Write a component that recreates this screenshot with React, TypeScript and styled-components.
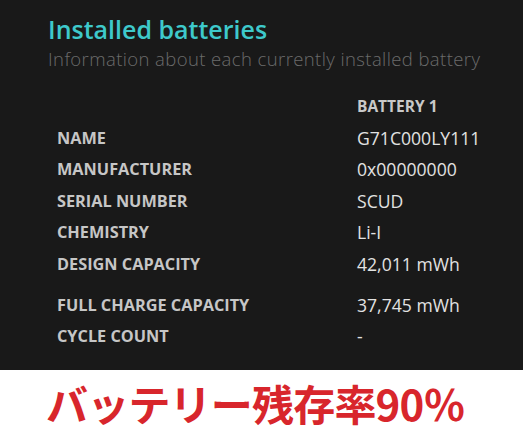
import styled, { createGlobalStyle } from "styled-components";

const GlobalStyle = createGlobalStyle`
  html, body {
    margin: 0;
    padding: 0;
    background: #ffffff;
  }
`;

const rows: { label: string; value: string; gap?: boolean }[] = [
  { label: "NAME", value: "G71C000LY111" },
  { label: "MANUFACTURER", value: "0x00000000" },
  { label: "SERIAL NUMBER", value: "SCUD" },
  { label: "CHEMISTRY", value: "Li-I" },
  { label: "DESIGN CAPACITY", value: "42,011 mWh" },
  { label: "FULL CHARGE CAPACITY", value: "37,745 mWh", gap: true },
  { label: "CYCLE COUNT", value: "-" },
];

const App = () => {
  return (
    <Page>
      <GlobalStyle />
      <Panel>
        <Title>Installed batteries</Title>
        <Subtitle>Information about each currently installed battery</Subtitle>
        <Grid>
          <Cell />
          <HeadCell>BATTERY 1</HeadCell>
          {rows.map((r) => (
            <Row key={r.label} $gap={r.gap}>
              <Label>{r.label}</Label>
              <Value>{r.value}</Value>
            </Row>
          ))}
        </Grid>
      </Panel>
      <Caption>バッテリー残存率90％</Caption>
    </Page>
  );
};

const Page = styled.div`
  width: 523px;
  height: 436px;
  overflow: hidden;
  background: #ffffff;
`;

const Panel = styled.div`
  background: #191919;
  height: 370px;
  box-sizing: border-box;
  padding: 12px 0 0 48px;
  font-family: "Open Sans", "Noto Sans", sans-serif;
`;

const Title = styled.h1`
  margin: 0;
  font-size: 25px;
  line-height: 34px;
  font-weight: 600;
  color: #3ec9cb;
`;

const Subtitle = styled.p`
  margin: 0;
  font-size: 18.5px;
  line-height: 26px;
  font-weight: 300;
  letter-spacing: 0.4px;
  color: #6b6b6b;
`;

const Grid = styled.div`
  display: grid;
  grid-template-columns: 300px 1fr;
  margin-top: 19px;
  padding-left: 9px;
`;

const Cell = styled.div``;

const HeadCell = styled.div`
  height: 31.5px;
  line-height: 31.5px;
  font-size: 15.5px;
  font-weight: 700;
  color: #c9c9c9;
`;

const Row = styled.div<{ $gap?: boolean }>`
  display: contents;
  & > * {
    height: 31.5px;
    line-height: 31.5px;
    margin-top: ${(p) => (p.$gap ? "9.5px" : "0")};
  }
`;

const Label = styled.div`
  font-size: 16.3px;
  font-weight: 700;
  color: #c6c6c6;
`;

const Value = styled.div`
  font-size: 17.6px;
  font-weight: 400;
  color: #e2e2e2;
`;

const Caption = styled.div`
  padding-left: 46px;
  margin-top: 8px;
  font-family: "Noto Sans CJK JP", "Noto Sans", sans-serif;
  font-size: 42px;
  line-height: 50px;
  font-weight: 700;
  color: #d8262c;
  letter-spacing: -0.8px;
`;

export default App;
